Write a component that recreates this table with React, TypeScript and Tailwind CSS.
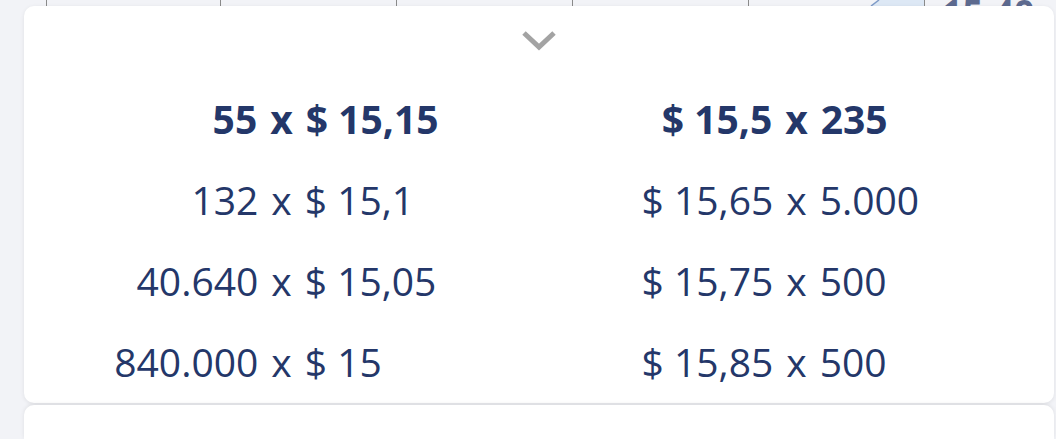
const bids = [
  { qty: "55", price: "$ 15,15" },
  { qty: "132", price: "$ 15,1" },
  { qty: "40.640", price: "$ 15,05" },
  { qty: "840.000", price: "$ 15" },
];

const asks = [
  { price: "$ 15,5", qty: "235" },
  { price: "$ 15,65", qty: "5.000" },
  { price: "$ 15,75", qty: "500" },
  { price: "$ 15,85", qty: "500" },
];

function Chevron() {
  return (
    <svg width="36" height="22" viewBox="0 0 36 22" fill="none">
      <polyline
        points="3,3 18,17 33,3"
        stroke="#a3a3a3"
        strokeWidth="5"
        strokeLinejoin="miter"
        strokeLinecap="butt"
      />
    </svg>
  );
}

export default function App() {
  return (
    <div
      className="w-[1056px] h-[439px] bg-[#f2f3f7] overflow-hidden flex flex-col"
      style={{ fontFamily: '"Open Sans", "Noto Sans", sans-serif' }}
    >
      {/* the table behind the sheet, only its bottom edge shows */}
      <div className="h-[6px] overflow-hidden flex shrink-0">
        <div className="w-[46px]" />
        <div className="w-[174px] border-l border-[#8a8a8a]" />
        <div className="w-[176px] border-l border-[#8a8a8a]" />
        <div className="w-[176px] border-l border-[#8a8a8a]" />
        <div className="w-[176px] border-l border-[#8a8a8a]" />
        <div className="w-[176px] border-l border-[#8a8a8a] flex justify-end">
          <svg width="56" height="6" viewBox="0 0 56 6">
            <polygon points="3,6 11,0 56,0 56,6" fill="#dde8f5" />
            <line x1="3" y1="6" x2="11" y2="0" stroke="#7f9cc8" strokeWidth="1.5" />
          </svg>
        </div>
        <div className="flex-1 border-l border-[#8a8a8a] pl-[17px]">
          <div className="-mt-[5px] text-[36px] leading-none font-bold text-[#5d6a8f]">15,40</div>
        </div>
      </div>

      <div className="ml-[24px] mr-[2px] h-[397px] shrink-0 bg-white rounded-[10px] shadow-[0_1px_4px_rgba(0,0,0,0.08)] flex flex-col">
        <div className="flex justify-center pt-[24px]">
          <Chevron />
        </div>

        <div className="mt-[27px] grid grid-cols-2 text-[39px] text-[#243769]">
          <div className="flex flex-col">
            {bids.map((b, i) => (
              <div
                key={i}
                className={`h-[81px] grid grid-cols-[1fr_auto_1fr] items-center gap-x-[13px] ${i === 0 ? "font-bold" : ""}`}
              >
                <span className="text-right">{b.qty}</span>
                <span>x</span>
                <span>{b.price}</span>
              </div>
            ))}
          </div>
          <div className="flex flex-col">
            {asks.map((a, i) => (
              <div
                key={i}
                className={`h-[81px] grid grid-cols-[1fr_auto_1fr] items-center gap-x-[13px] ${i === 0 ? "font-bold" : ""}`}
              >
                <span className="text-right">{a.price}</span>
                <span>x</span>
                <span>{a.qty}</span>
              </div>
            ))}
          </div>
        </div>
      </div>

      <div className="mt-[2px] ml-[24px] mr-[2px] flex-1 bg-white rounded-t-[10px] shadow-[0_-1px_4px_rgba(0,0,0,0.08)]" />
    </div>
  );
}
